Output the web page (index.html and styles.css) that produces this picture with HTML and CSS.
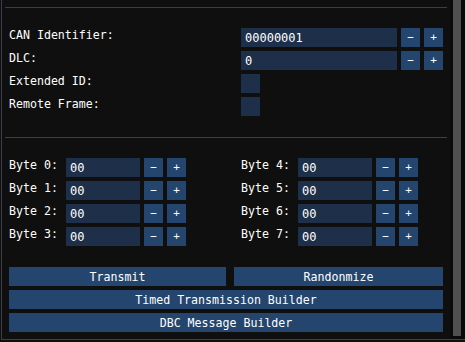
FILE: index.html
```html
<!DOCTYPE html>
<html lang="en">

<head>
    <meta charset="UTF-8">
    <meta name="viewport" content="width=device-width, initial-scale=1.0">
    <title>CAN Transmit</title>
    <link rel="stylesheet" href="styles.css">
</head>

<body>
    <div class="window">
        <div class="content">
            <div class="separator"></div>
            <div class="fields">
                <div class="field-row">
                    <span class="label">CAN Identifier:</span>
                    <span class="text-box wide">00000001</span>
                    <span class="small-btn">−</span>
                    <span class="small-btn">+</span>
                </div>
                <div class="field-row">
                    <span class="label">DLC:</span>
                    <span class="text-box wide">0</span>
                    <span class="small-btn">−</span>
                    <span class="small-btn">+</span>
                </div>
                <div class="field-row">
                    <span class="label">Extended ID:</span>
                    <span class="check"></span>
                </div>
                <div class="field-row">
                    <span class="label">Remote Frame:</span>
                    <span class="check"></span>
                </div>
            </div>
            <div class="separator second"></div>
            <div class="bytes">
                <div class="byte"><span class="byte-label">Byte 0:</span><span class="text-box byte-box">00</span><span class="small-btn">−</span><span class="small-btn">+</span></div>
                <div class="byte"><span class="byte-label">Byte 4:</span><span class="text-box byte-box">00</span><span class="small-btn">−</span><span class="small-btn">+</span></div>
                <div class="byte"><span class="byte-label">Byte 1:</span><span class="text-box byte-box">00</span><span class="small-btn">−</span><span class="small-btn">+</span></div>
                <div class="byte"><span class="byte-label">Byte 5:</span><span class="text-box byte-box">00</span><span class="small-btn">−</span><span class="small-btn">+</span></div>
                <div class="byte"><span class="byte-label">Byte 2:</span><span class="text-box byte-box">00</span><span class="small-btn">−</span><span class="small-btn">+</span></div>
                <div class="byte"><span class="byte-label">Byte 6:</span><span class="text-box byte-box">00</span><span class="small-btn">−</span><span class="small-btn">+</span></div>
                <div class="byte"><span class="byte-label">Byte 3:</span><span class="text-box byte-box">00</span><span class="small-btn">−</span><span class="small-btn">+</span></div>
                <div class="byte"><span class="byte-label">Byte 7:</span><span class="text-box byte-box">00</span><span class="small-btn">−</span><span class="small-btn">+</span></div>
            </div>
            <div class="actions">
                <div class="action-row">
                    <button class="btn transmit">Transmit</button>
                    <button class="btn grow">Randonmize</button>
                </div>
                <button class="btn">Timed Transmission Builder</button>
                <button class="btn">DBC Message Builder</button>
            </div>
        </div>
        <div class="scrollbar">
            <div class="grab"></div>
        </div>
    </div>
</body>

</html>
```

FILE: styles.css
```css
* {
    padding: 0;
    margin: 0;
    box-sizing: border-box;
}

body {
    background-color: #0f0f0f;
    color: #ffffff;
    font-family: "DejaVu Sans Mono", "Liberation Mono", monospace;
    font-size: 11.6px;
}

.window {
    display: flex;
    margin-left: 1px;
    width: 464px;
    height: 340px;
    border-left: 1px solid #3e3e47;
    border-bottom: 1px solid #3e3e47;
}

.content {
    flex: 1;
    padding: 7px 7px 0 7px;
}

.separator {
    height: 1px;
    margin: 0 -4px;
    background-color: #3e3e47;
}

.separator.second {
    margin-top: 21px;
}

.fields {
    display: flex;
    flex-direction: column;
    gap: 4px;
    margin-top: 20px;
}

.field-row {
    display: flex;
    height: 19px;
}

.field-row .label {
    width: 232px;
    line-height: 15px;
    white-space: pre;
}

.text-box {
    height: 19px;
    padding: 1px 4px 0 4px;
    line-height: 18px;
    font-size: 12px;
    background-color: #1d2f49;
}

.wide {
    width: 156px;
}

.small-btn {
    width: 19px;
    height: 19px;
    margin-left: 4px;
    padding-top: 1px;
    line-height: 18px;
    font-size: 11px;
    text-align: center;
    background-color: #24456d;
}

.check {
    width: 19px;
    height: 19px;
    background-color: #1d2f49;
}

.bytes {
    display: grid;
    grid-template-columns: 232px 1fr;
    row-gap: 4px;
    margin-top: 20px;
}

.byte {
    display: flex;
    height: 19px;
}

.byte-label {
    width: 57px;
    line-height: 15px;
}

.byte-box {
    width: 74px;
}

.actions {
    display: flex;
    flex-direction: column;
    gap: 4px;
    margin-top: 21px;
}

.action-row {
    display: flex;
    gap: 8px;
}

.btn {
    height: 19px;
    padding-top: 1px;
    border: none;
    color: #ffffff;
    font-family: inherit;
    font-size: 11.6px;
    line-height: 18px;
    text-align: center;
    background-color: #24456d;
}

.transmit {
    width: 217px;
}

.grow {
    flex: 1;
}

.scrollbar {
    width: 15px;
    background-color: #0a0a0a;
}

.grab {
    width: 8px;
    height: 336px;
    margin-left: 3px;
    background-color: #4f4f4f;
}
```
